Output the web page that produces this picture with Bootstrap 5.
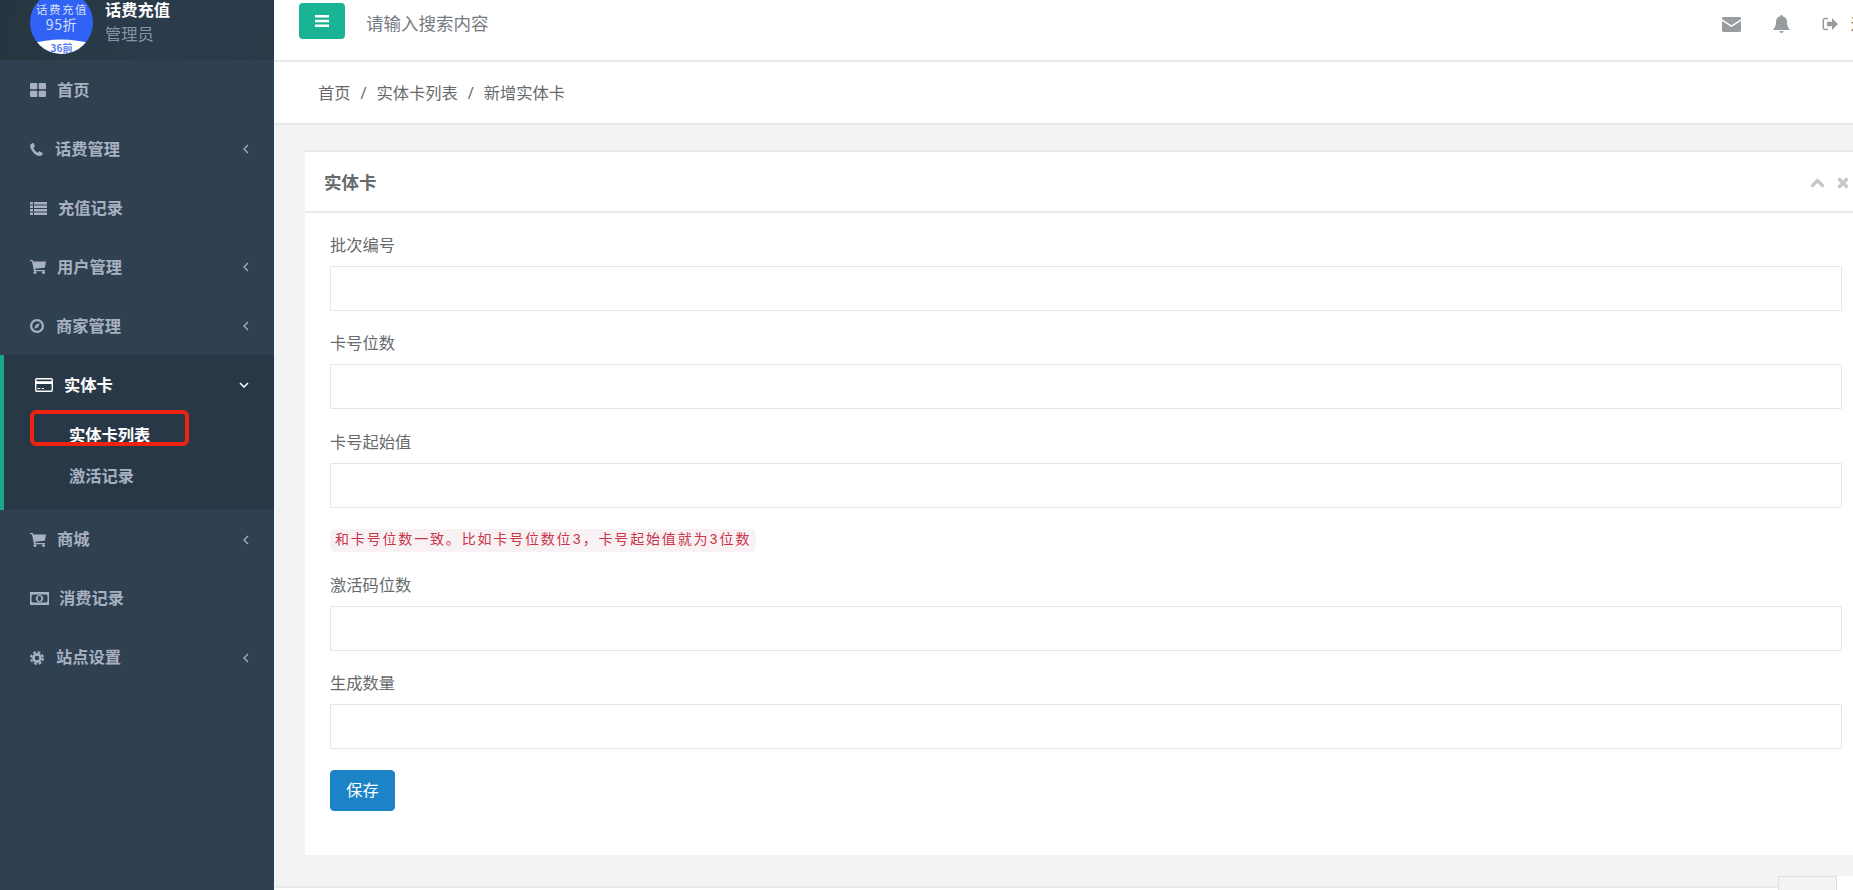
<!DOCTYPE html>
<html lang="zh-CN">
<head>
<meta charset="utf-8">
<title>实体卡</title>
<link href="https://cdn.jsdelivr.net/npm/bootstrap@5.3.0/dist/css/bootstrap.min.css" rel="stylesheet">
<style>
html,body{height:890px;overflow:hidden}
body{font-family:"Open Sans","Noto Sans CJK SC",sans-serif;font-size:16.25px;color:#676a6c;background:#f3f3f4}
.shell{height:890px;position:relative}
.sidepane{width:274px;flex:none;background:#2f4050;height:890px}
.profilebox{height:60px;background:linear-gradient(100deg,#26353f 0,#2b3b4b 55%,#2a3a49 100%);overflow:hidden;padding-left:30px;gap:12px}
.avatarsvg{width:63px;height:63px;flex:none;margin-bottom:6px;display:block}
.avatarsvg text{font-family:"Noto Sans CJK SC",sans-serif;text-anchor:middle}
.profiletext{padding-bottom:14px;line-height:24px;white-space:nowrap}
.profilename{color:#fff;font-weight:700}
.profilerole{color:#8095a8}
.sidelink{height:59px;padding:1px 25px 0 30px;color:#a7b1c2;font-weight:600;gap:11px}
.activeblock~.sidelink{padding-top:0}
.sidelink:hover{color:#fff}
.sidelink svg{flex:none;fill:currentColor}
.widegap{margin-right:1px}
.narrowgap{margin-right:-1px}
.chevleft{margin-left:auto;width:6px;height:10px}
.activeblock{position:relative;height:155px;background:#293846;border-left:4px solid #19aa8d}
.activehead{height:60px;padding:0 25px 0 31px;color:#fff;font-weight:600;gap:11px}
.activehead svg{flex:none}
.chevdown{margin-left:auto}
.sublink{height:41px;padding:0 0 0 65px;color:#a7b1c2;font-weight:600;display:flex;align-items:center}
.sublink.current{color:#fff}
.redmark{position:absolute;left:26px;top:55px;width:159px;height:36px;border:4px solid #ee2211;border-radius:6px;pointer-events:none}
.mainpane{min-width:0;flex:1 1 auto;overflow:hidden;height:890px}
.topstrip{width:1620px;height:62px;background:#fff;border-bottom:2px solid #e7eaec;padding:3px 11px 0 25px}
.togglebtn{width:46px;height:36px;background:#1ab394;border:0;border-radius:4px;padding:0}
.togglebtn:hover{background:#18a689}
.searchhint{font-size:17.5px;color:#757b80;margin-left:21px;line-height:40px}
.topicons{margin-left:auto;color:#999c9e;height:42px;gap:32px}
.exittext{font-size:16.25px;color:#8a6d4b;margin-left:-19px;white-space:nowrap}
.crumbbar{height:63px;background:#fff;border-bottom:2px solid #e7eaec;padding:1px 0 0 44px}
.crumbbar .breadcrumb{--bs-breadcrumb-margin-bottom:0;--bs-breadcrumb-item-padding-x:10px;--bs-breadcrumb-divider-color:#676a6c;--bs-breadcrumb-item-active-color:#676a6c}
.crumbbar a{color:#676a6c;text-decoration:none}
.cardbox{width:1562px;margin:25px 0 31px 31px;height:705px;border:0;border-top:2px solid #e7eaec;border-radius:0}
.cardbox .card-header{height:61px;background:#fff;border-bottom:2px solid #e7eaec;border-radius:0;padding:2px 18px 0 19px;color:#676a6c}
.cardtitle{font-size:17.5px;font-weight:700;margin:0}
.cardtools{margin-left:auto;gap:12px}
.cardbox .card-body{padding:19.500px 25px 0}
.fieldlabel{display:block;line-height:24px;margin-bottom:9.25px}
.fieldinput{height:45px;border:1.5px solid #e5e6e7;border-radius:1px;margin-bottom:20.25px}
.hintcode{display:inline-block;height:23px;line-height:23px;padding:0 5px;margin-bottom:20.5px;margin-top:1px;font-family:"Liberation Mono","Noto Sans CJK SC",monospace;font-size:14px;letter-spacing:1.83px;color:#c9354a;background:#f9f2f4;border-radius:5px;vertical-align:top}
.savebtn{width:65px;height:41px;padding:0;background:#1c84c6;border:1px solid #1c84c6;border-radius:4px;font-size:16.25px;margin-top:0}
.savebtn:hover{background:#1a7bb9}
.footline{height:4px;background:#fff;border-top:2px solid #e7eaec}
.cornerbox{position:absolute;left:1778px;top:876px;width:59px;height:14px;background:#f3f3f4;border:1.5px solid #e0e0e0;border-bottom:0;overflow:hidden}
.cornerfill{position:absolute;left:1837px;top:876px;width:16px;height:14px;background:#fff}
</style>
</head>
<body>
<div class="shell d-flex">
  <aside class="sidepane">
    <div class="profilebox d-flex align-items-end">
      <svg class="avatarsvg" viewBox="0 0 63 63">
        <defs><clipPath id="clipdisc"><circle cx="31.5" cy="31.5" r="31.5"/></clipPath></defs>
        <circle cx="31.5" cy="31.5" r="31.5" fill="#2f62f5"/>
        <text x="32" y="23" font-size="11.5" letter-spacing="1.5" fill="#d4def8">话费充值</text>
        <text x="31.5" y="39" font-size="14" letter-spacing=".6" fill="#d4def8">95折</text>
        <path clip-path="url(#clipdisc)" d="M0 53Q31 44 63 53V63H0Z" fill="#fff"/>
        <text x="31.5" y="60.500" font-size="10" font-weight="700" fill="#5b7df0">36前</text>
      </svg>
      <div class="profiletext">
        <div class="profilename">话费充值</div>
        <div class="profilerole">管理员</div>
      </div>
    </div>
    <nav class="nav flex-column flex-nowrap">
      <a class="nav-link sidelink d-flex align-items-center" href="#">
        <svg width="16" height="14" viewBox="0 0 16 14"><rect width="7.3" height="6.3" rx="1"/><rect x="8.7" width="7.3" height="6.3" rx="1"/><rect y="7.7" width="7.3" height="6.3" rx="1"/><rect x="8.7" y="7.7" width="7.3" height="6.3" rx="1"/></svg>
        <span>首页</span></a>
      <a class="nav-link sidelink d-flex align-items-center" href="#">
        <svg class="widegap" width="13" height="13" viewBox="0 0 13 13"><path d="M3 0 1 1C-.2 2 0 4 1 6c1.500 3 4 6 8 7 1.200.2 2.500-.2 3.500-1.500.5-.6.5-1.200 0-1.500L10 8.500c-.5-.3-1-.2-1.300.2L8 9.700C6 9 4 7 3.300 4.800l1-.8c.4-.3.5-.7.300-1.200L3.900.5C3.700 0 3.400-.1 3 0Z"/></svg>
        <span>话费管理</span>
        <svg class="chevleft" viewBox="0 0 6 10"><path d="M5 1 1 5l4 4" fill="none" stroke="currentColor" stroke-width="1.300"/></svg></a>
      <a class="nav-link sidelink d-flex align-items-center" href="#">
        <svg width="17" height="13" viewBox="0 0 17 13"><path d="M0 0h3v2.600H0zM4 0h13v2.600H4zM0 3.500h3v2.600H0zM4 3.500h13v2.600H4zM0 7h3v2.600H0zM4 7h13v2.600H4zM0 10.400h3V13H0zM4 10.400h13V13H4z"/></svg>
        <span>充值记录</span></a>
      <a class="nav-link sidelink d-flex align-items-center" href="#">
        <svg width="16" height="14" viewBox="0 0 16 14"><path d="M0 0h2.800l.5 1.500H16l-1.200 6.200-9.700 1 .3 1.200h9.500v1.300H4L2 1.300H0Z"/><circle cx="5" cy="12.500" r="1.500"/><circle cx="13.500" cy="12.500" r="1.500"/></svg>
        <span>用户管理</span>
        <svg class="chevleft" viewBox="0 0 6 10"><path d="M5 1 1 5l4 4" fill="none" stroke="currentColor" stroke-width="1.300"/></svg></a>
      <a class="nav-link sidelink d-flex align-items-center" href="#">
        <svg class="widegap" width="14" height="14" viewBox="0 0 14 14"><circle cx="7" cy="7" r="5.900" fill="none" stroke="currentColor" stroke-width="2.200"/><path d="M9.800 4.200 8.200 8.200 4.200 9.800 5.800 5.800Z"/></svg>
        <span>商家管理</span>
        <svg class="chevleft" viewBox="0 0 6 10"><path d="M5 1 1 5l4 4" fill="none" stroke="currentColor" stroke-width="1.300"/></svg></a>
      <div class="activeblock">
        <a class="nav-link activehead d-flex align-items-center" href="#">
          <svg width="18" height="14" viewBox="0 0 18 14"><rect x=".7" y=".7" width="16.600" height="12.600" rx="1.200" fill="none" stroke="#fff" stroke-width="1.400"/><rect x="1" y="3.200" width="16" height="2.800" fill="#fff"/><path d="M2.500 10.500h3M7 10.500h2" stroke="#fff"/></svg>
          <span>实体卡</span>
          <svg class="chevdown" width="10" height="6" viewBox="0 0 10 6"><path d="M1 1l4 4 4-4" fill="none" stroke="#fff" stroke-width="1.500"/></svg></a>
        <a class="sublink current text-decoration-none" href="#">实体卡列表</a>
        <a class="sublink text-decoration-none" href="#">激活记录</a>
        <div class="redmark"></div>
      </div>
      <a class="nav-link sidelink d-flex align-items-center" href="#">
        <svg width="16" height="14" viewBox="0 0 16 14"><path d="M0 0h2.800l.5 1.500H16l-1.200 6.200-9.700 1 .3 1.200h9.500v1.300H4L2 1.300H0Z"/><circle cx="5" cy="12.500" r="1.500"/><circle cx="13.500" cy="12.500" r="1.500"/></svg>
        <span>商城</span>
        <svg class="chevleft" viewBox="0 0 6 10"><path d="M5 1 1 5l4 4" fill="none" stroke="currentColor" stroke-width="1.300"/></svg></a>
      <a class="nav-link sidelink d-flex align-items-center" href="#">
        <svg class="narrowgap" width="19" height="13" viewBox="0 0 19 13"><path fill-rule="evenodd" d="M0 0h19v13H0ZM2.500 2.500a1.500 1.500 0 0 1-1 1v6a1.500 1.500 0 0 1 1 1H16.500a1.500 1.500 0 0 1 1-1v-6a1.500 1.500 0 0 1-1-1ZM9.500 2.800a3.700 3.700 0 1 0 .01 0Z"/><path d="M8 5a1.500 2 0 1 0 3 3 1.500 2 0 1 0-3-3Z" fill="#2f4050"/></svg>
        <span>消费记录</span></a>
      <a class="nav-link sidelink d-flex align-items-center" href="#">
        <svg class="widegap" width="14" height="14" viewBox="0 0 14 14"><circle cx="7" cy="7" r="6" fill="none" stroke="currentColor" stroke-width="2" stroke-dasharray="2.800 1.910"/><circle cx="7" cy="7" r="3.600" fill="none" stroke="currentColor" stroke-width="2.600"/></svg>
        <span>站点设置</span>
        <svg class="chevleft" viewBox="0 0 6 10"><path d="M5 1 1 5l4 4" fill="none" stroke="currentColor" stroke-width="1.300"/></svg></a>
    </nav>
  </aside>
  <main class="mainpane">
    <div class="topstrip d-flex align-items-start">
      <button class="btn togglebtn d-flex align-items-center justify-content-center" type="button" aria-label="菜单">
        <svg width="14" height="12" viewBox="0 0 14 12"><path d="M0 0h14v2.500H0zM0 4.700h14v2.500H0zM0 9.400h14v2.500H0z" fill="#fff"/></svg>
      </button>
      <span class="searchhint">请输入搜索内容</span>
      <div class="topicons d-flex align-items-center">
        <svg width="19" height="15" viewBox="0 0 19 15" fill="#999c9e"><path d="M0 1.500C0 .7.700 0 1.500 0h16c.8 0 1.500.7 1.500 1.500v.7l-9.500 6L0 2.200Z"/><path d="M0 4l9.500 6L19 4v9.500c0 .8-.7 1.500-1.500 1.500h-16C.7 15 0 14.300 0 13.500Z"/></svg>
        <svg width="17" height="18" viewBox="0 0 17 18" fill="#999c9e"><path d="M8.500 0c.7 0 1.200.5 1.200 1.200C12.400 1.800 14 4 14 7c0 4 1 5.500 3 8H0c2-2.500 3-4 3-8 0-3 1.600-5.200 4.300-5.800C7.300.5 7.800 0 8.500 0Z"/><path d="M6.500 16h4a2 2 0 0 1-4 0Z"/></svg>
        <svg width="16" height="14" viewBox="0 0 16 14" fill="#999c9e"><path d="M6 1.500H3C2 1.500 1.300 2.300 1.300 3.200v7.600c0 .9.700 1.700 1.700 1.700h3" fill="none" stroke="#999c9e" stroke-width="1.500"/><path d="M10 1l6 6-6 6V9.300H5V4.700h5Z"/></svg>
        <span class="exittext">退出</span>
      </div>
    </div>
    <div class="crumbbar d-flex align-items-center">
      <ol class="breadcrumb">
        <li class="breadcrumb-item"><a href="#">首页</a></li>
        <li class="breadcrumb-item"><a href="#">实体卡列表</a></li>
        <li class="breadcrumb-item active">新增实体卡</li>
      </ol>
    </div>
    <div class="card cardbox">
      <div class="card-header d-flex align-items-center">
        <h5 class="cardtitle">实体卡</h5>
        <div class="cardtools d-flex align-items-center">
          <svg width="15" height="10" viewBox="0 0 15 10"><path d="M1.500 8.500l6-6 6 6" fill="none" stroke="#c4c6c8" stroke-width="3.200"/></svg>
          <svg width="12" height="12" viewBox="0 0 12 12"><path d="M1.500 1.500l9 9M10.500 1.500l-9 9" fill="none" stroke="#c4c6c8" stroke-width="3.400"/></svg>
        </div>
      </div>
      <div class="card-body">
        <form>
          <label class="fieldlabel" for="f1">批次编号</label>
          <input id="f1" class="form-control fieldinput" type="text">
          <label class="fieldlabel" for="f2">卡号位数</label>
          <input id="f2" class="form-control fieldinput" type="text">
          <label class="fieldlabel" for="f3">卡号起始值</label>
          <input id="f3" class="form-control fieldinput" type="text">
          <code class="hintcode">和卡号位数一致。比如卡号位数位3，卡号起始值就为3位数</code>
          <label class="fieldlabel" for="f4">激活码位数</label>
          <input id="f4" class="form-control fieldinput" type="text">
          <label class="fieldlabel" for="f5">生成数量</label>
          <input id="f5" class="form-control fieldinput" type="text">
          <button class="btn btn-primary savebtn" type="button">保存</button>
        </form>
      </div>
    </div>
    <div class="footline"></div>
  </main>
  <div class="cornerbox">
    <svg width="56" height="14" viewBox="0 0 56 14"><path d="M11 13c2-1.500 6-2 11-1.500l4 1.500Z" fill="#e8522a"/><path d="M36 13c0-2 2-4.500 4.500-5 2.500.5 4.500 3 4.500 5Z" fill="#86c232"/></svg>
  </div>
  <div class="cornerfill"></div>
</div>
<script src="https://cdn.jsdelivr.net/npm/bootstrap@5.3.0/dist/js/bootstrap.bundle.min.js"></script>
</body>
</html>
